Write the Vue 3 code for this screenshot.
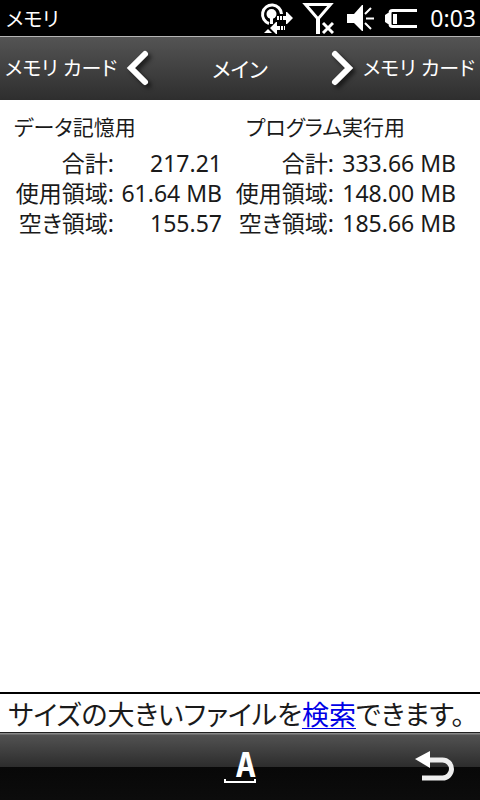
<template>
  <div class="screen">
    <header class="status-bar">
      <h1>メモリ</h1>
      <div class="status-icons">
        <!-- Conexión de datos -->
        <svg width="34" height="32" viewBox="0 0 34 32">
          <path d="M9 21.500A9.500 9.500 0 1 1 21.500 12" fill="none" stroke="#fff" stroke-width="3" />
          <circle cx="11.500" cy="12" r="5" fill="#fff" />
          <path d="M10 14h3v8h-3z" fill="#fff" />
          <path d="M17 14h2v4h-2zM20 14h2v4h-2zM23 14h3v-4h1l6 6-6 6h-1v-4h-3z" fill="#fff" />
          <path d="M10 26l6-6h1v4h3v4h-3v4h-1zM21 24h2v4h-2zM24 24h1v4h-1z" fill="#fff" />
          <path d="M4 31l4-4 4 4z" fill="#fff" />
        </svg>
        <!-- Sin señal -->
        <svg class="signal" width="32" height="32" viewBox="0 0 32 32">
          <path d="M3.500 2.500h25L16 17z" fill="none" stroke="#fff" stroke-width="3" />
          <path d="M14 15h4v17h-4z" fill="#fff" />
          <path d="M21 21l10 10M31 21L21 31" stroke="#fff" stroke-width="3" />
        </svg>
        <!-- Volumen -->
        <svg class="volume" width="28" height="32" viewBox="0 0 28 32">
          <path d="M1 12h7l8-9h1v26h-1l-8-8H1z" fill="#fff" />
          <path d="M19 12l6-6M20 16.500h8M19 21l6 6" stroke="#fff" stroke-width="2" />
        </svg>
        <!-- Batería -->
        <svg class="battery" width="33" height="32" viewBox="0 0 33 32">
          <path d="M32 8.500H7.500Q5 8.500 5 11v11q0 2.500 2.500 2.500H32" fill="none" stroke="#fff" stroke-width="3" />
          <path d="M0 13l3-2h2v11H3l-3-2z" fill="#fff" />
          <path d="M8 12h4v10H8z" fill="#fff" />
        </svg>
        <span class="clock">0:03</span>
      </div>
    </header>

    <nav class="tabs">
      <button class="tab prev" type="button" @click="toggle">
        <span>{{ pages[1 - page] }}</span>
        <svg class="chevron" width="24" height="40" viewBox="0 0 24 40">
          <path d="M19 5L5 19l14 14" fill="none" stroke="#fff" stroke-width="6" stroke-linecap="round" />
        </svg>
      </button>
      <h2>{{ pages[page] }}</h2>
      <button class="tab next" type="button" @click="toggle">
        <svg class="chevron" width="24" height="40" viewBox="0 0 24 40">
          <path d="M5 5l14 14L5 33" fill="none" stroke="#fff" stroke-width="6" stroke-linecap="round" />
        </svg>
        <span>{{ pages[1 - page] }}</span>
      </button>
    </nav>

    <main class="memory">
      <table v-for="block in blocks" :key="block.title">
        <caption>{{ block.title }}</caption>
        <tbody>
          <tr v-for="row in block.rows" :key="row.label">
            <th scope="row">{{ row.label }}:</th>
            <td>{{ row.value }}</td>
          </tr>
        </tbody>
      </table>
    </main>

    <p class="hint">サイズの大きいファイルを<a href="#search">検索</a>できます。</p>

    <footer class="soft-bar">
      <button class="key input-key" type="button">A</button>
      <button class="key back-key" type="button" aria-label="戻る">
        <svg width="42" height="32" viewBox="0 0 42 32">
          <path d="M14 9h14.500a9 9 0 0 1 0 18H8" fill="none" stroke="#eee" stroke-width="5" />
          <path d="M1 8L16 0v17z" fill="#fff" />
        </svg>
      </button>
    </footer>
  </div>
</template>

<script setup>
import { ref } from 'vue';

// Páginas y página activa
const pages = ['メイン', 'メモリ カード'];
const page = ref(0);

const toggle = () => {
  page.value = 1 - page.value;
};

// Datos de memoria
const blocks = ref([
  {
    title: 'データ記憶用',
    rows: [
      { label: '合計', value: '217.21' },
      { label: '使用領域', value: '61.64 MB' },
      { label: '空き領域', value: '155.57' },
    ],
  },
  {
    title: 'プログラム実行用',
    rows: [
      { label: '合計', value: '333.66 MB' },
      { label: '使用領域', value: '148.00 MB' },
      { label: '空き領域', value: '185.66 MB' },
    ],
  },
]);
</script>

<style>
body {
  margin: 0;
}
</style>

<style scoped>
.screen {
  display: flex;
  flex-direction: column;
  min-height: 100vh;
  background: #fff;
  color: #1a1a1a;
  font-family: 'Noto Sans', 'Noto Sans CJK JP', sans-serif;
  font-size: 23px;
  line-height: 30px;
  font-feature-settings: 'palt';
}

h1,
h2 {
  margin: 0;
  font-weight: 400;
}

h1 {
  padding-top: 4px;
  font-size: 20px;
}

h2 {
  font-size: 21px;
}

button {
  padding: 0;
  border: none;
  background: none;
  color: #fff;
  font: inherit;
  font-feature-settings: inherit;
  cursor: pointer;
}

svg {
  display: block;
}

/* Barra de estado */
.status-bar {
  display: flex;
  align-items: center;
  justify-content: space-between;
  height: 36px;
  padding: 0 4px 0 6px;
  background: #000;
  color: #fff;
}

.status-icons {
  display: flex;
  align-items: center;
}

.signal {
  margin-left: 8px;
}

.volume {
  margin-left: 12px;
}

.battery {
  margin-left: 11px;
}

.clock {
  margin-left: 12px;
}

/* Pestañas */
.tabs {
  display: grid;
  grid-template-columns: 1fr auto 1fr;
  align-items: center;
  height: 63px;
  padding: 0 5px;
  border-top: 1px solid #b4b4b4;
  background: linear-gradient(#545454, #2e2e2e);
  color: #fff;
}

.tab {
  display: flex;
  align-items: center;
  gap: 9px;
  font-size: 20px;
}

.next {
  justify-self: end;
}

.chevron {
  filter: drop-shadow(3px 3px 2px rgba(0, 0, 0, 0.6));
}

/* Tablas */
.memory {
  flex: 1;
  display: grid;
  grid-template-columns: 208px 222px;
  align-content: start;
  gap: 12px;
  padding: 12px 14px;
}

table {
  border-collapse: collapse;
}

caption {
  padding: 0 0 6px;
  font-size: 21px;
  text-align: left;
}

table + table caption {
  padding-left: 12px;
}

th,
td {
  padding: 0;
  font-weight: 400;
  text-align: right;
  white-space: nowrap;
}

th {
  width: 100px;
}

/* Aviso inferior */
.hint {
  margin: 0;
  padding: 6px 8px 2px;
  border-top: 2px solid #000;
  font-size: 27px;
  white-space: nowrap;
}

.hint a {
  color: #0000e6;
  text-underline-offset: 3px;
  text-decoration-thickness: 1px;
}

/* Botones inferiores */
.soft-bar {
  display: grid;
  grid-template-columns: 1fr auto 1fr;
  align-items: center;
  height: 67px;
  border-top: 1px solid #222;
  background: linear-gradient(#888 1px, #525252 2px, #2c2c2c 34px, #080808 34px, #0c0c0c);
}

.input-key {
  grid-column: 2;
  width: 32px;
  font-family: 'DejaVu Sans Mono', monospace;
  font-size: 34px;
  font-weight: 700;
  line-height: 28px;
  text-align: right;
}

/* Corchete bajo la letra */
.input-key::after {
  content: '';
  display: block;
  height: 2px;
  border: 2px solid #fff;
  border-top: none;
}

.back-key {
  justify-self: end;
  margin-right: 24px;
}
</style>
